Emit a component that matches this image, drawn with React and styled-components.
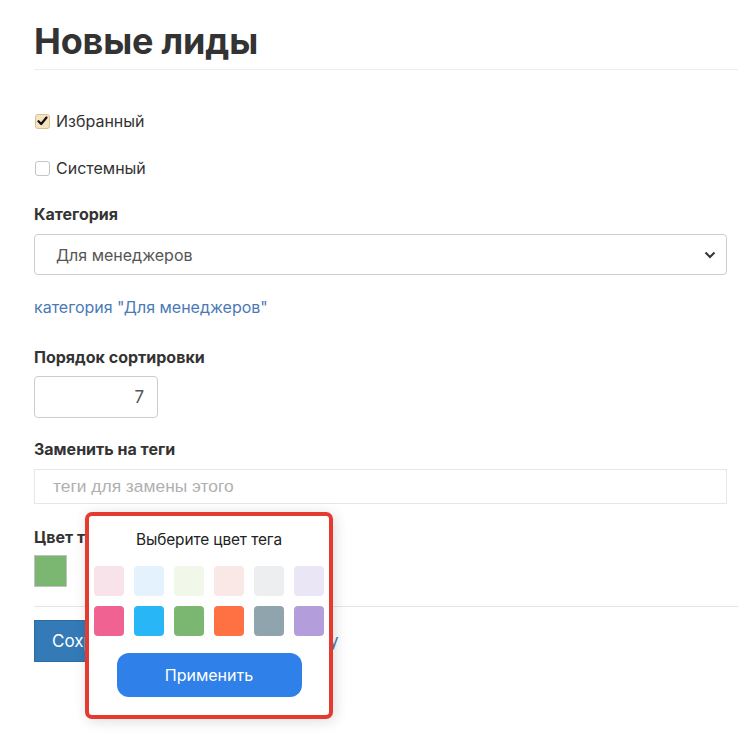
import React from "react";
import styled, { createGlobalStyle } from "styled-components";

const Global = createGlobalStyle`
  html, body { margin: 0; padding: 0; background: #fff; }
  body { font-family: Inter, "Noto Sans", sans-serif; color: #333; }
  * { box-sizing: border-box; }
`;

const Page = styled.div`
  padding: 0 11px 0 34px;
  width: 738px;
  overflow: hidden;
  min-height: 737px;
`;

const Header = styled.div`
  padding: 20px 0 6px;
  margin-right: -11px;
  border-bottom: 1px solid #eeeeee;
`;

const Title = styled.h1`
  margin: 0;
  font-size: 36px;
  line-height: 43px;
  font-weight: 700;
  color: #333;
  letter-spacing: -0.2px;
`;

const Field = styled.div`
  margin-top: ${(p) => p.$mt}px;
`;

const CheckRow = styled.label`
  display: flex;
  align-items: center;
  gap: 6px;
  height: 20px;
  font-size: 16px;
  color: #333;
  margin-top: ${(p) => p.$mt}px;
`;

const Box = styled.span`
  width: 15px;
  height: 15px;
  margin-left: 1px;
  border-radius: 3px;
  border: 1px solid ${(p) => (p.$checked ? "#d8c08f" : "#c4c4c4")};
  background: ${(p) => (p.$checked ? "#f4e4c1" : "#fff")};
  display: flex;
  align-items: center;
  justify-content: center;
`;

const Label = styled.div`
  font-size: 16px;
  line-height: 20px;
  font-weight: 700;
  color: #333;
`;

const Select = styled.div`
  margin-top: 10px;
  height: 41px;
  border: 1px solid #cccccc;
  border-radius: 4px;
  display: flex;
  align-items: center;
  justify-content: space-between;
  padding: 0 10px 0 21px;
  font-size: 16px;
  color: #555;
`;

const Link = styled.a`
  display: block;
  font-size: 16px;
  line-height: 20px;
  color: #4a7ab5;
  text-decoration: none;
`;

const NumberInput = styled.div`
  margin-top: 9px;
  width: 124px;
  height: 42px;
  border: 1px solid #cccccc;
  border-radius: 4px;
  display: flex;
  align-items: center;
  justify-content: flex-end;
  padding-right: 13px;
  font-size: 17px;
  color: #555;
`;

const TextInput = styled.div`
  margin-top: 10px;
  height: 35px;
  border: 1px solid #e6e6e6;
  display: flex;
  align-items: center;
  padding-left: 18px;
  font-family: "Liberation Sans", Arial, sans-serif;
  font-size: 17.4px;
  color: #b0b0b0;
`;

const ColorField = styled.div`
  position: relative;
`;

const CurrentColor = styled.div`
  margin-top: 8px;
  width: 33px;
  height: 32px;
  border: 1px solid #c2c2c2;
  background: #7cb772;
`;

const Divider = styled.div`
  margin-top: 19px;
  margin-right: -11px;
  border-top: 1px solid #e5e5e5;
`;

const Actions = styled.div`
  margin-top: 13px;
  display: flex;
  align-items: center;
  gap: 14px;
`;

const SaveButton = styled.button`
  height: 42px;
  padding: 0 17px;
  border: 1px solid #2e6da4;
  border-radius: 0;
  background: #337ab7;
  color: #fff;
  font-family: inherit;
  font-size: 17px;
`;

const BackLink = styled.a`
  font-size: 17px;
  color: #4a7ab5;
  text-decoration: none;
`;

const Popup = styled.div`
  position: absolute;
  left: 51px;
  top: -15px;
  width: 248px;
  height: 207px;
  border: 4px solid #e53a30;
  border-radius: 7px;
  background: #fff;
  box-shadow: 2px 2px 14px rgba(0, 0, 0, 0.14);
  display: flex;
  flex-direction: column;
  align-items: center;
  padding: 14px 5px 0;
  z-index: 2;
`;

const PopupTitle = styled.div`
  font-size: 15.4px;
  line-height: 20px;
  color: #222;
  letter-spacing: -0.1px;
`;

const Grid = styled.div`
  margin-top: 16px;
  display: grid;
  grid-template-columns: repeat(6, 30px);
  gap: 10px;
`;

const Swatch = styled.div`
  width: 30px;
  height: 30px;
  border-radius: 4px;
  background: ${(p) => p.$color};
`;

const ApplyButton = styled.button`
  margin-top: 17px;
  width: 185px;
  height: 44px;
  border: 0;
  border-radius: 12px;
  background: #2f80e8;
  color: #fff;
  font-family: inherit;
  font-size: 16px;
`;

const colors = [
  "#f8e3ea", "#e3f2fd", "#f1f8e9", "#f9e8e5", "#eceef0", "#ebe6f5",
  "#f06292", "#29b6f6", "#7cb772", "#ff7043", "#90a4ae", "#b39ddb",
];

export default function App() {
  return (
    <>
      <Global />
      <Page>
        <Header>
          <Title>Новые лиды</Title>
        </Header>

        <CheckRow $mt={41}>
          <Box $checked>
            <svg width="11" height="10" viewBox="0 0 11 10">
              <path d="M1.5 5.2 L4.2 8 L9.5 1.5" fill="none" stroke="#111" strokeWidth="2.2" strokeLinecap="round" strokeLinejoin="round" />
            </svg>
          </Box>
          Избранный
        </CheckRow>
        <CheckRow $mt={27}>
          <Box />
          Системный
        </CheckRow>

        <Field $mt={26}>
          <Label>Категория</Label>
          <Select>
            <span>Для менеджеров</span>
            <svg width="12" height="8" viewBox="0 0 12 8">
              <path d="M1.5 1.5 L6 6 L10.5 1.5" fill="none" stroke="#333" strokeWidth="2" />
            </svg>
          </Select>
        </Field>

        <Field $mt={22}>
          <Link href="#">категория "Для менеджеров"</Link>
        </Field>

        <Field $mt={30}>
          <Label>Порядок сортировки</Label>
          <NumberInput>7</NumberInput>
        </Field>

        <Field $mt={21}>
          <Label>Заменить на теги</Label>
          <TextInput>теги для замены этого</TextInput>
        </Field>

        <Field $mt={23}>
          <ColorField>
            <Label>Цвет тега</Label>
            <CurrentColor />
            <Popup>
              <PopupTitle>Выберите цвет тега</PopupTitle>
              <Grid>
                {colors.map((c) => (
                  <Swatch key={c} $color={c} />
                ))}
              </Grid>
              <ApplyButton>Применить</ApplyButton>
            </Popup>
          </ColorField>
        </Field>

        <Divider />
        <Actions>
          <SaveButton>Сохранить</SaveButton>
          <BackLink href="#">Вернуться к списку</BackLink>
        </Actions>
      </Page>
    </>
  );
}
